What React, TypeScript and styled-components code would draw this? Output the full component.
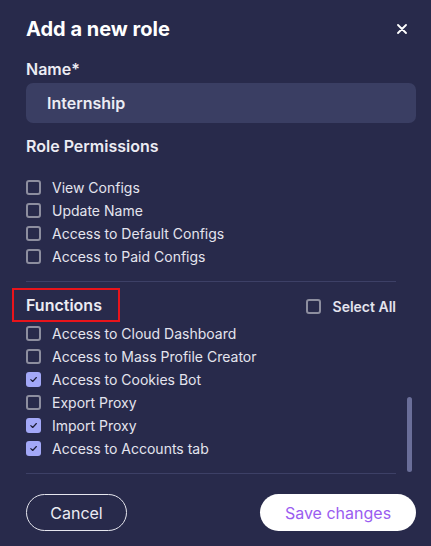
import React, { useState } from 'react';
import styled, { createGlobalStyle } from 'styled-components';

const GlobalStyle = createGlobalStyle`
  html, body {
    margin: 0;
    padding: 0;
    background: #282a4b;
  }
  * { box-sizing: border-box; }
`;

const Modal = styled.div`
  width: 431px;
  height: 546px;
  background: #282a4b;
  font-family: Inter, 'Noto Sans', sans-serif;
  color: #ececf3;
  padding: 17px 15px 0 26px;
  display: flex;
  flex-direction: column;
`;

const Header = styled.div`
  display: flex;
  align-items: center;
  justify-content: space-between;
  height: 24px;
`;

const Title = styled.h2`
  margin: 0;
  font-size: 20px;
  line-height: 24px;
  font-weight: 700;
  color: #ffffff;
`;

const Close = styled.button`
  border: none;
  background: none;
  padding: 0;
  width: 16px;
  height: 16px;
  margin-right: 6px;
  display: flex;
  align-items: center;
  justify-content: center;
  cursor: pointer;
`;

const Label = styled.div`
  font-size: 16px;
  line-height: 20px;
  font-weight: 600;
  color: #ececf3;
  margin-top: ${(p: { $top: number }) => p.$top}px;
`;

const NameInput = styled.input`
  margin-top: 4px;
  height: 40px;
  width: 100%;
  border: none;
  border-radius: 7px;
  background: #3a3e63;
  color: #ececf3;
  font-family: inherit;
  font-size: 16px;
  font-weight: 600;
  padding: 0 21px;
  outline: none;
`;

const ScrollArea = styled.div`
  position: relative;
  padding-right: 20px;
`;

const Thumb = styled.div`
  position: absolute;
  right: 4px;
  width: 5px;
  top: 274px;
  height: 75px;
  border-radius: 3px;
  background: #6a6e99;
`;

const List = styled.div`
  display: flex;
  flex-direction: column;
  margin-top: ${(p: { $top: number }) => p.$top}px;
`;

const Row = styled.label`
  display: flex;
  align-items: center;
  gap: 11px;
  height: 23px;
  font-size: 14px;
  color: #e4e4ee;
  cursor: pointer;
`;

const Box = styled.span<{ $checked: boolean }>`
  width: 15px;
  height: 15px;
  border-radius: 3px;
  flex-shrink: 0;
  display: flex;
  align-items: center;
  justify-content: center;
  border: ${(p) => (p.$checked ? 'none' : '2px solid #8d8e9f')};
  background: ${(p) => (p.$checked ? '#a3a8f8' : 'transparent')};
`;

const Divider = styled.div`
  height: 1px;
  background: #3d4066;
  margin-top: ${(p: { $top: number }) => p.$top}px;
`;

const SectionHead = styled.div`
  display: flex;
  align-items: center;
  justify-content: space-between;
  margin-top: 9px;
  height: 30px;
`;

const Highlight = styled.div`
  margin-left: -14px;
  margin-top: -2px;
  padding: 0 16px 0 12px;
  height: 34px;
  display: flex;
  align-items: center;
  border: 2px solid #e8141b;
  font-size: 16px;
  font-weight: 600;
  color: #ececf3;
`;

const SelectAll = styled(Row)`
  font-weight: 600;
  gap: 12px;
`;

const Footer = styled.div`
  display: flex;
  justify-content: space-between;
  margin-top: 20px;
`;

const Pill = styled.button<{ $primary?: boolean }>`
  height: 37px;
  border-radius: 19px;
  font-family: inherit;
  font-size: 16px;
  cursor: pointer;
  padding: 0;
  white-space: nowrap;
  border: ${(p) => (p.$primary ? 'none' : '1px solid #e6e6ee')};
  background: ${(p) => (p.$primary ? '#ffffff' : 'transparent')};
  color: ${(p) => (p.$primary ? '#9a5cf0' : '#ececf3')};
  width: ${(p) => (p.$primary ? '156px' : '101px')};
`;

const Check = () => (
  <svg width="9" height="9" viewBox="0 0 10 10" fill="none">
    <path d="M2 5.2 L4.1 7.2 L8.2 2.8" stroke="#1c1d35" strokeWidth="1.3" strokeLinecap="round" strokeLinejoin="round" />
  </svg>
);

const permissions = ['View Configs', 'Update Name', 'Access to Default Configs', 'Access to Paid Configs'];

const functions = [
  'Access to Cloud Dashboard',
  'Access to Mass Profile Creator',
  'Access to Cookies Bot',
  'Export Proxy',
  'Import Proxy',
  'Access to Accounts tab',
];

function Item({ text, checked, onToggle }: { text: string; checked: boolean; onToggle: () => void }) {
  return (
    <Row onClick={onToggle}>
      <Box $checked={checked}>{checked && <Check />}</Box>
      {text}
    </Row>
  );
}

export default function App() {
  const [name, setName] = useState('Internship');
  const [perms, setPerms] = useState<string[]>([]);
  const [funcs, setFuncs] = useState<string[]>(['Access to Cookies Bot', 'Import Proxy', 'Access to Accounts tab']);

  const toggle = (list: string[], set: (v: string[]) => void, t: string) =>
    set(list.includes(t) ? list.filter((x) => x !== t) : [...list, t]);

  const allSelected = funcs.length === functions.length;

  return (
    <>
      <GlobalStyle />
      <Modal>
        <Header>
          <Title>Add a new role</Title>
          <Close aria-label="close">
            <svg width="10" height="10" viewBox="0 0 10 10">
              <path d="M1 1 L9 9 M9 1 L1 9" stroke="#ffffff" strokeWidth="1.8" strokeLinecap="round" />
            </svg>
          </Close>
        </Header>
        <Label $top={18}>Name*</Label>
        <NameInput value={name} onChange={(e) => setName(e.target.value)} />
        <ScrollArea>
          <Label $top={13}>Role Permissions</Label>
          <List $top={20}>
            {permissions.map((p) => (
              <Item key={p} text={p} checked={perms.includes(p)} onToggle={() => toggle(perms, setPerms, p)} />
            ))}
          </List>
          <Divider $top={13} />
          <SectionHead>
            <Highlight>Functions</Highlight>
            <SelectAll onClick={() => setFuncs(allSelected ? [] : functions)}>
              <Box $checked={allSelected}>{allSelected && <Check />}</Box>
              Select All
            </SelectAll>
          </SectionHead>
          <List $top={1}>
            {functions.map((f) => (
              <Item key={f} text={f} checked={funcs.includes(f)} onToggle={() => toggle(funcs, setFuncs, f)} />
            ))}
          </List>
          <Divider $top={13} />
          <Thumb />
        </ScrollArea>
        <Footer>
          <Pill>Cancel</Pill>
          <Pill $primary>Save changes</Pill>
        </Footer>
      </Modal>
    </>
  );
}
